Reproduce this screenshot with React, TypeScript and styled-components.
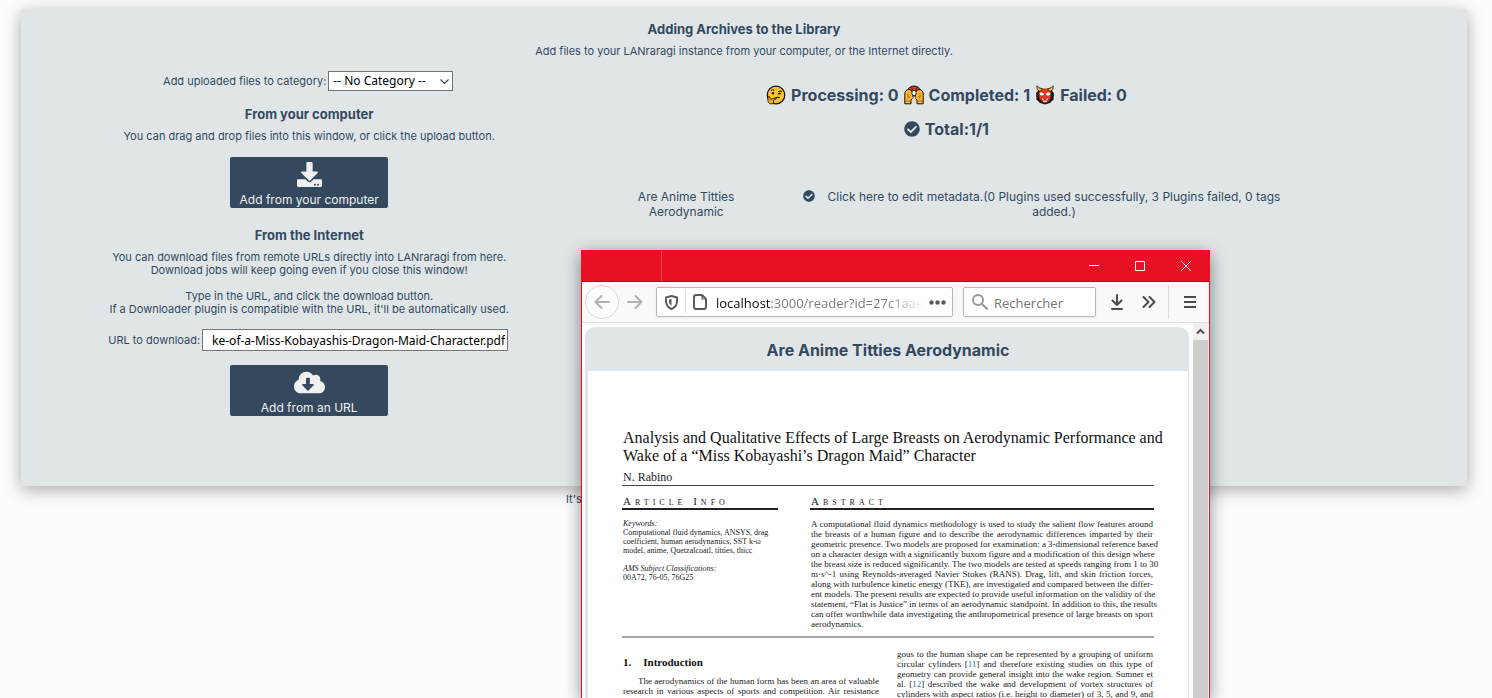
import React from "react";
import styled, { createGlobalStyle, css } from "styled-components";
import { FaCheckCircle, FaCloudDownloadAlt, FaDownload } from "react-icons/fa";

const ink = "#34495e";
const panel = "#e0e6e8";
const red = "#e81123";

const GlobalStyle = createGlobalStyle`
  *, *::before, *::after { box-sizing: border-box; }
  body {
    margin: 0;
    background: #fcfcfc;
    color: ${ink};
    font: 11px/13px Inter, sans-serif;
  }
  h1, h2, h3, p { margin: 0; }
`;

const Page = styled.div`
  position: relative;
  min-height: 100vh;
  overflow: hidden;
  padding-top: 9px;
`;

const Panel = styled.main`
  margin: 0 25px 0 21px;
  padding: 12px 0 70px;
  background: ${panel};
  box-shadow: 0 4px 16px rgba(0, 0, 0, 0.32);
  text-align: center;
`;

const Heading = styled.h2`
  font-size: 13px;
  line-height: 16px;
  font-weight: 700;
  margin-bottom: 8px;
`;

const Columns = styled.div`
  display: flex;
  margin-top: 13px;
`;

const FormColumn = styled.section`
  width: 40%;
  padding-right: 2px;
  display: flex;
  flex-direction: column;
  align-items: center;
`;

const StatusColumn = styled.section`
  width: 48%;
`;

const Field = styled.div`
  display: flex;
  align-items: center;
  gap: 2px;
  padding-right: 2px;
`;

const control = css`
  margin: 0;
  border: 1px solid #767676;
  border-radius: 0;
  background: #fff;
  color: #000;
  font: 12px/18px "Noto Sans", sans-serif;
`;

const SelectBox = styled.div`
  position: relative;
  width: 125px;
  svg {
    position: absolute;
    right: 4px;
    top: 7px;
    pointer-events: none;
  }
`;

const Select = styled.select`
  ${control}
  display: block;
  appearance: none;
  width: 100%;
  height: 20px;
  padding: 0 4px;
`;

const UrlInput = styled.input`
  ${control}
  width: 306px;
  height: 22px;
  padding: 0 2px;
  text-align: right;
`;

const Block = styled.div<{ $before: number; $after: number }>`
  margin-top: ${(p) => p.$before}px;
  margin-bottom: ${(p) => p.$after}px;
`;

const ActionButton = styled.button<{ $iconWidth: number }>`
  display: flex;
  flex-direction: column;
  align-items: center;
  justify-content: space-between;
  width: 158px;
  height: 51px;
  padding: 5px 0 0;
  border: 0;
  border-radius: 2px;
  background: ${ink};
  color: #f0f0f0;
  font: 12px/16px Inter, sans-serif;
  svg {
    flex: none;
    width: ${(p) => p.$iconWidth}px;
    height: 25px;
  }
`;

const UrlField = styled(Field)`
  margin-bottom: 14px;
`;

const StatusLine = styled.h1`
  display: flex;
  justify-content: center;
  align-items: center;
  gap: 5px;
  margin-top: 14px;
  font-size: 16px;
  line-height: 20px;
  font-weight: 700;
`;

const Jobs = styled.table`
  width: 100%;
  margin-top: 50px;
  border-collapse: collapse;
  table-layout: fixed;
  font-size: 12px;
  line-height: 15px;
  td {
    padding: 0;
    vertical-align: top;
  }
`;

const NameCell = styled.td`
  width: 25%;
  && { padding: 0 30px; }
`;

const IconCell = styled.td`
  width: 6%;
  text-align: right;
  svg { display: block; margin: 1px 0 0 auto; }
`;

const MetaLink = styled.a`
  color: inherit;
  text-decoration: none;
`;

const Footer = styled.footer`
  padding: 7px 0 0 566px;
`;

/* Reader window floating above the page */

const Window = styled.section`
  position: absolute;
  left: 581px;
  top: 250px;
  bottom: 0;
  width: 629px;
  display: flex;
  flex-direction: column;
  border: solid ${red};
  border-width: 0 1px;
  background: #fcfcfc;
  box-shadow: 0 4px 16px rgba(0, 0, 0, 0.45);
`;

const TitleBar = styled.header`
  display: flex;
  flex: none;
  height: 32px;
  background: ${red};
  border-bottom: 1px solid #a8101d;
`;

const TabEdge = styled.div`
  width: 80px;
  margin-top: 1px;
  margin-right: auto;
  border-right: 1px solid #ee4654;
`;

const plainButton = css`
  display: flex;
  flex: none;
  align-items: center;
  justify-content: center;
  padding: 0;
  border: 0;
  background: none;
`;

const CaptionButton = styled.button`
  ${plainButton}
  width: 46px;
  color: #fff;
`;

const Toolbar = styled.nav`
  display: flex;
  flex: none;
  align-items: center;
  height: 41px;
  padding: 0 3px;
  background: #f9f9fa;
  border-bottom: 1px solid #e0e0e1;
`;

const ToolButton = styled.button<{ $round?: boolean }>`
  ${plainButton}
  width: ${(p) => (p.$round ? 34 : 32)}px;
  height: ${(p) => (p.$round ? 34 : 32)}px;
  border: ${(p) => (p.$round ? "1px solid #d9d9da" : "0")};
  border-radius: ${(p) => (p.$round ? "50%" : "0")};
  background: ${(p) => (p.$round ? "#fcfcfc" : "none")};
  &:last-child { margin-left: auto; }
`;

const Box = styled.div<{ $width: number }>`
  display: flex;
  flex: none;
  align-items: center;
  width: ${(p) => p.$width}px;
  height: 30px;
  margin: 0 5px;
  padding: 0 6px 0 8px;
  border: 1px solid #b8b8b9;
  border-radius: 2px;
  background: #fff;
  box-shadow: 0 1px 3px rgba(0, 0, 0, 0.06);
`;

const boxInput = css`
  flex: 1;
  min-width: 0;
  height: 24px;
  padding: 2px 0 0;
  border: 0;
  outline: 0;
  font: 13px/20px "Open Sans", sans-serif;
`;

const Address = styled.input`
  ${boxInput}
  margin: 0 6px 0 9px;
  background: linear-gradient(to right, #0c0c0d 54px, #77777a 54px, #77777a 170px, transparent 208px);
  background-clip: text;
  -webkit-background-clip: text;
  color: transparent;
`;

const Search = styled.input`
  ${boxInput}
  margin-left: 6px;
  background: none;
  &::placeholder { color: #747476; opacity: 1; }
`;

const Divider = styled.span<{ $height: number; $gap: number }>`
  flex: none;
  width: 1px;
  height: ${(p) => p.$height}px;
  margin: 0 ${(p) => p.$gap}px;
  background: #dcdcdd;
`;

const Viewport = styled.div`
  display: flex;
  flex: 1;
  min-height: 0;
`;

const Reader = styled.div`
  flex: 1;
  min-width: 0;
  margin: 4px 4px 0 3px;
  padding: 0 1px 0 3px;
  border-radius: 10px 10px 0 0;
  background: ${panel};
  display: flex;
  flex-direction: column;
`;

const ReaderTitle = styled.h1`
  flex: none;
  padding: 13px 0 11px;
  font-size: 16px;
  line-height: 20px;
  font-weight: 700;
  text-align: center;
`;

const Scrollbar = styled.div`
  width: 15px;
  margin-right: 1px;
  display: flex;
  flex-direction: column;
  background: #cdcdcd;
`;

const ScrollUp = styled.button`
  ${plainButton}
  height: 17px;
  background: #f0f0f0;
`;

const Paper = styled.article`
  flex: 1;
  min-height: 0;
  overflow: hidden;
  padding: 58px 34px 0;
  background: #fff;
  color: #222;
  font: 9px/10px "Liberation Serif", serif;
`;

const PaperTitle = styled.h2`
  padding: 0 1px;
  font-size: 16px;
  line-height: 18px;
  font-weight: 400;
  color: #111;
  white-space: nowrap;
`;

const Author = styled.p`
  margin-top: 5px;
  padding: 0 1px 1px;
  font-size: 12px;
  line-height: 14px;
  border-bottom: 1px solid #444;
`;

const Summary = styled.div`
  display: grid;
  grid-template-columns: 156px minmax(0, 1fr);
  column-gap: 32px;
  padding: 8px 0 7px;
  border-bottom: 2px solid #a8a8a8;
`;

const SectionLabel = styled.h3`
  margin-bottom: 9px;
  padding: 0 1px;
  border-bottom: 2px solid #222;
  font-size: 11px;
  line-height: 14px;
  font-weight: 400;
  font-variant: small-caps;
  letter-spacing: 4px;
`;

const Keywords = styled.p`
  margin-bottom: 9px;
  padding: 0 1px;
  font-size: 8px;
  line-height: 9px;
`;

const Lines = styled.p<{ $ragged?: boolean }>`
  padding: 0 1px;
  span {
    display: block;
    white-space: nowrap;
    text-align: justify;
    text-align-last: justify;
  }
  span:last-child {
    text-align-last: ${(p) => (p.$ragged ? "left" : "justify")};
  }
`;

const Body = styled.div`
  display: grid;
  grid-template-columns: 1fr 1fr;
  column-gap: 16px;
  padding-top: 11px;
`;

const Intro = styled.h3`
  display: flex;
  gap: 12px;
  margin: 7px 0;
  padding: 0 1px;
  font-size: 11px;
  line-height: 13px;
  color: #111;
`;

const Indent = styled.span`
  padding-left: 15px;
`;

const Cite = styled.a`
  color: #1c76b5;
  text-decoration: none;
`;

const abstractLines = [
  "A computational fluid dynamics methodology is used to study the salient flow features around",
  "the breasts of a human figure and to describe the aerodynamic differences imparted by their",
  "geometric presence. Two models are proposed for examination: a 3-dimensional reference based",
  "on a character design with a significantly buxom figure and a modification of this design where",
  "the breast size is reduced significantly. The two models are tested at speeds ranging from 1 to 30",
  "m·s^-1 using Reynolds-averaged Navier Stokes (RANS). Drag, lift, and skin friction forces,",
  "along with turbulence kinetic energy (TKE), are investigated and compared between the differ-",
  "ent models. The present results are expected to provide useful information on the validity of the",
  "statement, “Flat is Justice” in terms of an aerodynamic standpoint. In addition to this, the results",
  "can offer worthwhile data investigating the anthropometrical presence of large breasts on sport",
  "aerodynamics.",
];

const Thinking = () => (
  <svg width="20" height="20" viewBox="0 0 20 20" aria-hidden="true">
    <circle cx="10" cy="10" r="8.8" fill="#fdc02f" stroke="#111" strokeWidth="1.2" />
    <path d="M5 5.600q1.600-1.400 3.200-.4M12 6.600q2-1 4 .2" fill="none" stroke="#111" strokeWidth="1" />
    <ellipse cx="7" cy="8.2" rx="1.1" ry="1.3" fill="#111" />
    <ellipse cx="13.4" cy="8.6" rx="1.6" ry=".9" fill="#111" />
    <path d="M8.600 13.400q2.600-1.600 5.200-.8" fill="none" stroke="#111" strokeWidth="1.1" />
    <path d="M2 11.400q1.200-.8 1.800.8l.8 2 5-1.200q1 .6 0 1.400l-2.200.8q1 3-1.400 3.800-3 .4-4-2.400z" fill="#f5a81c" stroke="#111" strokeWidth=".8" />
  </svg>
);

const Hooray = () => (
  <svg width="20" height="20" viewBox="0 0 20 20" aria-hidden="true">
    <path d="M3.500 6.500Q4.500 1 10 1t6.500 5.500v4h-13z" fill="#d9471b" stroke="#111" strokeWidth="1" />
    <path d="M7.500 2l1 3M12.500 2l-1 3" stroke="#111" strokeWidth=".8" />
    <path d="M.8 18.800V9Q1 4.500 5 4.500q3 0 3.700 3.500L9 13l-2 2v3.800z" fill="#fdb62f" stroke="#111" strokeWidth="1" />
    <path d="M19.200 18.800V9Q19 4.500 15 4.500q-3 0-3.700 3.500L11 13l2 2v3.800z" fill="#fdb62f" stroke="#111" strokeWidth="1" />
    <ellipse cx="10" cy="8" rx="2.200" ry="2.800" fill="#fff" stroke="#111" strokeWidth=".9" />
    <path d="M4 8.500v4.500l2-1.500M16 8.500v4.500l-2-1.500M1.500 16h5M13.500 16h5" fill="none" stroke="#a8620a" strokeWidth=".9" />
    <path d="M8.500 12.500h3v6h-3z" fill="#f0d3c6" />
  </svg>
);

const Ogre = () => (
  <svg width="20" height="20" viewBox="0 0 20 20" aria-hidden="true">
    <path d="M4 4h12l3 4.500-.5 6-3.500 3.500-5 1.500L5 18l-3.500-3.500L1 8.500z" fill="#171717" />
    <path d="M6 3.500h8l2 4-.4 5.500-2.600 4-3 1-3-1-2.600-4L4 7.500z" fill="#e5341f" />
    <path d="M2 .8l2 2 3.500 1L5 6.500Q1 5 2 .8zM18 .8l-2 2-3.500 1L15 6.500Q19 5 18 .8z" fill="#fbb42c" stroke="#111" strokeWidth=".8" />
    <ellipse cx="6.800" cy="9" rx="2.200" ry="1.500" fill="#fff" transform="rotate(12 6.800 9)" />
    <ellipse cx="13.200" cy="9" rx="2.200" ry="1.500" fill="#fff" transform="rotate(-12 13.200 9)" />
    <path d="M6.500 14q3.500 1.500 7 0l-1.200 3H7.700z" fill="#7d150c" />
    <path d="M6.800 13l.8 2.500 1.200-1zM13.200 13l-.8 2.500-1.200-1zM8 15.500h4v1.200H8z" fill="#fff" />
  </svg>
);

export default function App() {
  return (
    <Page>
      <GlobalStyle />
      <Panel>
        <Heading>Adding Archives to the Library</Heading>
        <p>Add files to your LANraragi instance from your computer, or the Internet directly.</p>
        <Columns>
          <FormColumn>
            <Field>
              <label htmlFor="category">Add uploaded files to category:</label>
              <SelectBox>
                <Select id="category" defaultValue="none">
                  <option value="none">-- No Category --</option>
                </Select>
                <svg width="9" height="7" viewBox="0 0 9 7" fill="none" stroke="#444" strokeWidth="1.200">
                  <path d="M.5 1.500l4 4 4-4" />
                </svg>
              </SelectBox>
            </Field>
            <Block $before={15} $after={14}>
              <Heading>From your computer</Heading>
              <p>You can drag and drop files into this window, or click the upload button.</p>
            </Block>
            <ActionButton type="button" $iconWidth={25}>
              <FaDownload />
              Add from your computer
            </ActionButton>
            <Block $before={19} $after={13}>
              <Heading>From the Internet</Heading>
              <p>
                You can download files from remote URLs directly into LANraragi from here.
                <br />
                Download jobs will keep going even if you close this window!
                <br />
                <br />
                Type in the URL, and click the download button.
                <br />
                If a Downloader plugin is compatible with the URL, it'll be automatically used.
              </p>
            </Block>
            <UrlField>
              <label htmlFor="url">URL to download:</label>
              <UrlInput id="url" defaultValue="ke-of-a-Miss-Kobayashis-Dragon-Maid-Character.pdf" />
            </UrlField>
            <ActionButton type="button" $iconWidth={31}>
              <FaCloudDownloadAlt />
              Add from an URL
            </ActionButton>
          </FormColumn>
          <StatusColumn>
            <StatusLine>
              <Thinking /> <span>Processing: 0</span> <Hooray /> <span>Completed: 1</span> <Ogre /> <span>Failed: 0</span>
            </StatusLine>
            <StatusLine>
              <FaCheckCircle size={16} /> <span>Total:1/1</span>
            </StatusLine>
            <Jobs>
              <tbody>
                <tr>
                  <NameCell>Are Anime Titties Aerodynamic</NameCell>
                  <IconCell><FaCheckCircle size={12} /></IconCell>
                  <td>
                    <MetaLink href="#edit">
                      Click here to edit metadata.(0 Plugins used successfully, 3 Plugins failed, 0 tags added.)
                    </MetaLink>
                  </td>
                </tr>
              </tbody>
            </Jobs>
          </StatusColumn>
        </Columns>
      </Panel>
      <Footer>It's</Footer>

      <Window>
        <TitleBar>
          <TabEdge />
          <CaptionButton type="button" aria-label="Minimize">
            <svg width="10" height="10" stroke="currentColor"><path d="M0 4.500h10" /></svg>
          </CaptionButton>
          <CaptionButton type="button" aria-label="Maximize">
            <svg width="10" height="10" fill="none" stroke="currentColor"><path d="M.5.5h9v9h-9z" /></svg>
          </CaptionButton>
          <CaptionButton type="button" aria-label="Close">
            <svg width="10" height="10" stroke="currentColor"><path d="M0 0l10 10M10 0L0 10" /></svg>
          </CaptionButton>
        </TitleBar>
        <Toolbar>
          <ToolButton $round type="button" aria-label="Back">
            <svg width="16" height="16" fill="none" stroke="#b1b1b3" strokeWidth="2" strokeLinecap="round" strokeLinejoin="round">
              <path d="M15 8H1.500M7.500 2L1.500 8l6 6" />
            </svg>
          </ToolButton>
          <ToolButton type="button" aria-label="Forward">
            <svg width="16" height="16" fill="none" stroke="#b1b1b3" strokeWidth="2" strokeLinecap="round" strokeLinejoin="round">
              <path d="M1 8h13.500M8.500 2l6 6-6 6" />
            </svg>
          </ToolButton>
          <Box $width={297}>
            <svg width="13" height="15" viewBox="0 0 13 15" fill="none" stroke="#5b5b5d" strokeWidth="2">
              <path d="M6.500 1L12 2.500V6.500Q11.600 12 6.500 14 1.400 12 1 6.500V2.500z" strokeLinejoin="round" />
              <path d="M6.500 4L4 4.600v2.200Q4.300 9.600 6.500 11z" fill="#5b5b5d" stroke="none" />
            </svg>
            <Divider $height={22} $gap={7} />
            <svg width="14" height="16" viewBox="0 0 14 16" fill="none" stroke="#5b5b5d" strokeWidth="2" strokeLinejoin="round">
              <path d="M9 1H3Q1 1 1 3v10q0 2 2 2h8q2 0 2-2V5z" />
              <path d="M9 1v4h4" strokeWidth="1.200" />
            </svg>
            <Address aria-label="Address" defaultValue="localhost:3000/reader?id=27c1aae" />
            <svg width="17" height="5" fill="#5b5b5d">
              <circle cx="2.500" cy="2.500" r="2.200" /><circle cx="8.500" cy="2.500" r="2.200" /><circle cx="14.500" cy="2.500" r="2.200" />
            </svg>
          </Box>
          <Box $width={133}>
            <svg width="16" height="16" fill="none" stroke="#98989a" strokeWidth="2">
              <circle cx="6" cy="6" r="5" /><path d="M9.700 9.700l6 6" />
            </svg>
            <Search aria-label="Search" placeholder="Rechercher" />
          </Box>
          <ToolButton type="button" aria-label="Downloads">
            <svg width="14" height="16" fill="none" stroke="#4a4a4f" strokeWidth="2" strokeLinecap="round" strokeLinejoin="round">
              <path d="M7 1v10M2.500 6.500L7 11l4.500-4.500M2 15h10" />
            </svg>
          </ToolButton>
          <ToolButton type="button" aria-label="More tools">
            <svg width="14" height="12" fill="none" stroke="#4a4a4f" strokeWidth="2" strokeLinecap="round" strokeLinejoin="round">
              <path d="M1.500 1l5 5-5 5M7.500 1l5 5-5 5" />
            </svg>
          </ToolButton>
          <Divider $height={34} $gap={3} />
          <ToolButton type="button" aria-label="Menu">
            <svg width="12" height="12" stroke="#4a4a4f" strokeWidth="2"><path d="M0 1h12M0 6h12M0 11h12" /></svg>
          </ToolButton>
        </Toolbar>
        <Viewport>
          <Reader>
            <ReaderTitle>Are Anime Titties Aerodynamic</ReaderTitle>
            <Paper>
              <PaperTitle>
                Analysis and Qualitative Effects of Large Breasts on Aerodynamic Performance and
                <br />
                Wake of a “Miss Kobayashi’s Dragon Maid” Character
              </PaperTitle>
              <Author>N. Rabino</Author>
              <Summary>
                <div>
                  <SectionLabel>Article Info</SectionLabel>
                  <Keywords>
                    <em>Keywords:</em>
                    <br />
                    Computational fluid dynamics, ANSYS, drag
                    <br />
                    coefficient, human aerodynamics, SST k-ω
                    <br />
                    model, anime, Quetzalcoatl, titties, thicc
                  </Keywords>
                  <Keywords>
                    <em>AMS Subject Classifications:</em>
                    <br />
                    00A72, 76-05, 76G25
                  </Keywords>
                </div>
                <div>
                  <SectionLabel>Abstract</SectionLabel>
                  <Lines $ragged>
                    {abstractLines.map((line) => <span key={line}>{line}</span>)}
                  </Lines>
                </div>
              </Summary>
              <Body>
                <div>
                  <Intro><span>1.</span><span>Introduction</span></Intro>
                  <Lines>
                    <Indent>The aerodynamics of the human form has been an area of valuable</Indent>
                    <span>research in various aspects of sports and competition. Air resistance</span>
                  </Lines>
                </div>
                <Lines>
                  <span>gous to the human shape can be represented by a grouping of uniform</span>
                  <span>circular cylinders [<Cite href="#ref-11">11</Cite>] and therefore existing studies on this type of</span>
                  <span>geometry can provide general insight into the wake region. Sumner et</span>
                  <span>al. [<Cite href="#ref-12">12</Cite>] described the wake and development of vortex structures of</span>
                  <span>cylinders with aspect ratios (i.e. height to diameter) of 3, 5, and 9, and</span>
                </Lines>
              </Body>
            </Paper>
          </Reader>
          <Scrollbar>
            <ScrollUp type="button" aria-label="Scroll up">
              <svg width="9" height="7" fill="none" stroke="#505050" strokeWidth="2"><path d="M1 5.500l3.500-3.500L8 5.500" /></svg>
            </ScrollUp>
          </Scrollbar>
        </Viewport>
      </Window>
    </Page>
  );
}
